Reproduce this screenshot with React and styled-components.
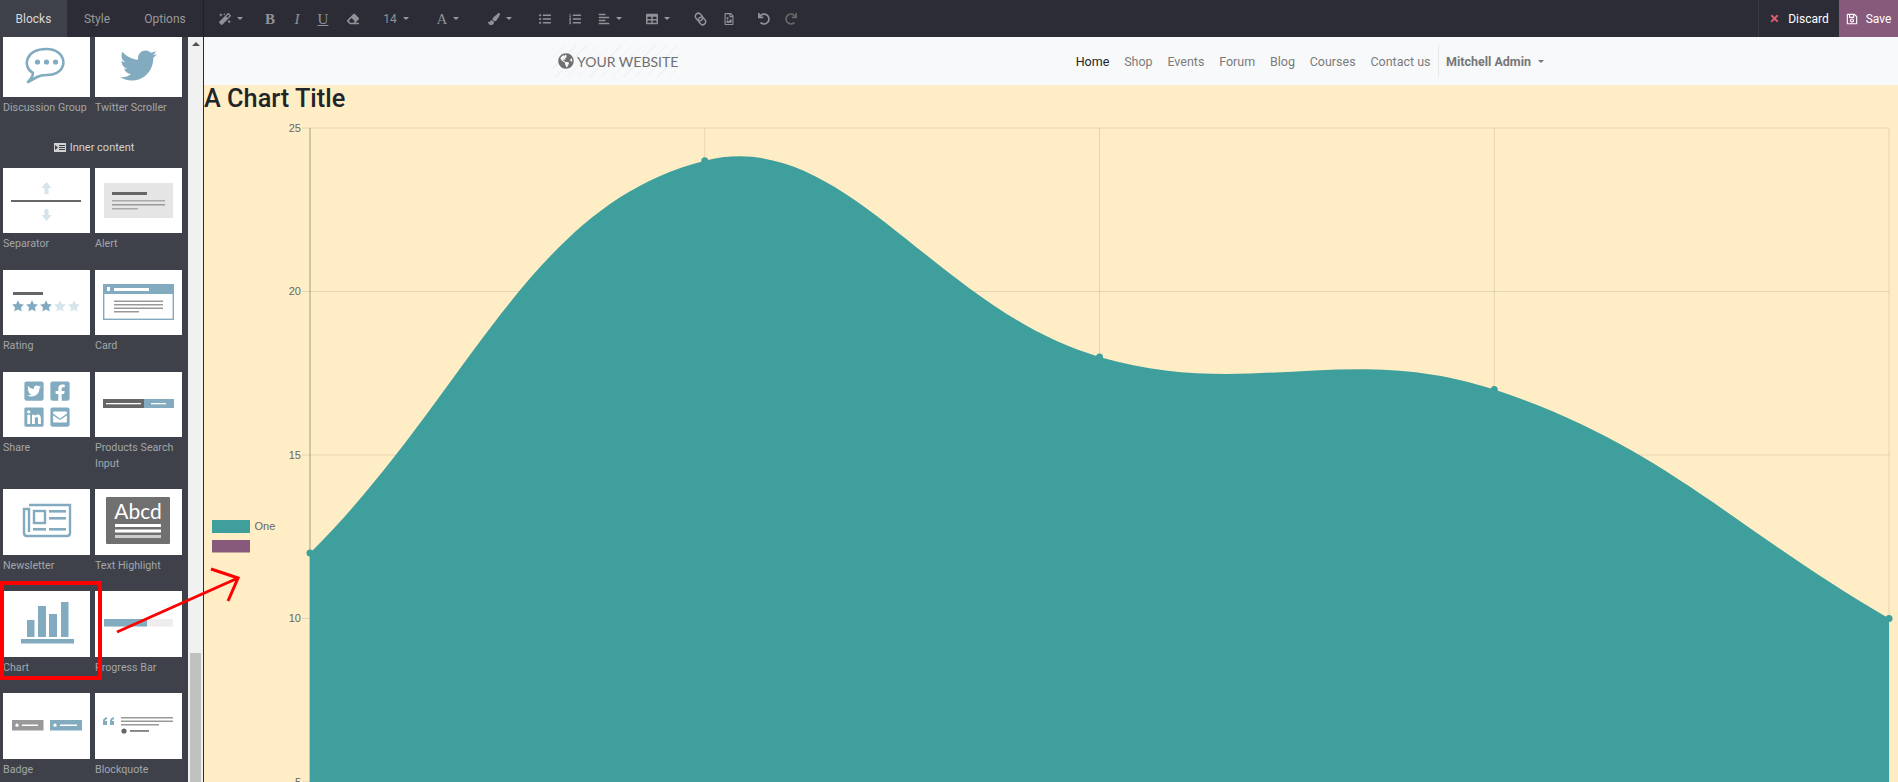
import React from 'react';
import styled, { createGlobalStyle } from 'styled-components';
import {
  FaMagic, FaEraser, FaPaintBrush, FaListUl, FaListOl,
  FaAlignLeft, FaTable, FaRegFileImage, FaUndo, FaRedo, FaTimes, FaRegSave,
  FaTwitter, FaTwitterSquare, FaFacebookSquare, FaLinkedin, FaEnvelopeSquare, FaGlobeAmericas,
} from 'react-icons/fa';

const BLUE = '#82abc0';
const PALE = '#d6e4ec';
const GREY = '#666666';
const TEAL = '#3e9f9d';
const PURPLE = '#875a7b';

const GlobalStyle = createGlobalStyle`
  html, body {
    margin: 0;
    height: 100%;
    overflow: hidden;
    font-family: Roboto, "Liberation Sans", sans-serif;
  }
`;

const Page = styled.div`
  position: relative;
  display: flex;
  flex-direction: column;
  height: 100vh;
  overflow: hidden;
`;

const TopBar = styled.header`
  display: flex;
  flex: 0 0 37px;
  background: #2c2c36;
  color: #999;
  font-size: 12px;
`;

const Tab = styled.div`
  display: flex;
  align-items: center;
  justify-content: center;
  width: ${(p) => p.$w}px;
  background: ${(p) => (p.$active ? '#3e4149' : 'transparent')};
  color: ${(p) => (p.$active ? '#d8d8d8' : '#999')};
`;

const Tools = styled.div`
  display: flex;
  align-items: center;
  border-left: 1px solid #1f1f27;
`;

const Tool = styled.div`
  display: flex;
  align-items: center;
  justify-content: center;
  gap: 6px;
  width: ${(p) => p.$w}px;
  margin-left: ${(p) => p.$ml}px;
  color: ${(p) => p.$color || '#8f9296'};
  font-size: 12px;
`;

const Letter = styled.span`
  font-family: "Liberation Serif", serif;
  font-size: 15px;
  font-weight: ${(p) => (p.$bold ? 700 : 400)};
  font-style: ${(p) => (p.$italic ? 'italic' : 'normal')};
  text-decoration: ${(p) => (p.$underline ? 'underline' : 'none')};
  line-height: 16px;
`;

const Caret = styled.span`
  display: inline-block;
  width: 0;
  height: 0;
  border-left: 3px solid transparent;
  border-right: 3px solid transparent;
  border-top: 3.5px solid ${(p) => p.$color || '#999'};
`;

const ActionButton = styled.div`
  display: flex;
  align-items: center;
  justify-content: center;
  gap: 8px;
  width: ${(p) => p.$w}px;
  color: #fff;
  background: ${(p) => p.$bg};
  border-left: ${(p) => (p.$bordered ? '1px solid #3a3a44' : 'none')};
`;

const ActionBar = styled.div`
  display: flex;
  margin-left: auto;
`;

const Body = styled.div`
  display: flex;
  flex: 1;
  min-height: 0;
`;

const Sidebar = styled.aside`
  flex: 0 0 188px;
  overflow: hidden;
  background: #3e4149;
`;

const SidebarScroll = styled.div`
  margin-top: -5.3px;
`;

const BlockGrid = styled.div`
  display: grid;
  grid-template-columns: 87px 87px;
  column-gap: 5px;
  padding-left: 3px;
`;

const Block = styled.div`
  margin-bottom: 18px;
`;

const Thumb = styled.div`
  height: 65.5px;
  background: #fff;

  svg {
    display: block;
  }
`;

const BlockLabel = styled.div`
  padding-top: 3px;
  color: #a2a6ab;
  font-size: 10.7px;
  line-height: 15.5px;
`;

const SectionTitle = styled.div`
  display: flex;
  align-items: center;
  justify-content: center;
  gap: 4px;
  height: 34px;
  padding-bottom: 6px;
  box-sizing: border-box;
  color: #d0d2d4;
  font-size: 11px;
`;

const ScrollTrack = styled.div`
  display: flex;
  flex-direction: column;
  align-items: center;
  flex: 0 0 15px;
  background: #f1f1f1;
  border-right: 1px solid #2c2c36;
`;

const ScrollArrow = styled.span`
  width: 0;
  height: 0;
  margin-top: 5px;
  border-left: 4px solid transparent;
  border-right: 4px solid transparent;
  border-bottom: 4px solid #505050;
`;

const ScrollThumb = styled.div`
  width: 11px;
  height: 129px;
  margin-top: auto;
  background: #c1c1c1;
`;

const Content = styled.main`
  display: flex;
  flex-direction: column;
  flex: 1;
  min-width: 0;
  background: #ffeec5;
`;

const NavBar = styled.nav`
  display: flex;
  align-items: center;
  flex: 0 0 48px;
  padding: 0 354px 0 349px;
  background: #f8f9fa;
  font-size: 12.5px;
`;

const Logo = styled.div`
  display: flex;
  align-items: center;
  gap: 3px;
  height: 32px;
  padding: 0 3px 0 5px;
  color: #707070;
  font-family: Lato, sans-serif;
  font-size: 14px;
  background: repeating-linear-gradient(135deg, #eef0f2 0 1px, transparent 1px 8px);
`;

const NavLinks = styled.div`
  display: flex;
  align-items: center;
  margin-left: auto;
`;

const NavLink = styled.a`
  padding: 0 7.4px;
  color: ${(p) => (p.$active ? '#212529' : '#7b7b7b')};
`;

const UserMenu = styled.div`
  display: flex;
  align-items: center;
  gap: 7px;
  height: 32px;
  padding-left: 7px;
  color: #777;
  font-weight: 700;
  border-left: 1px solid #e6e7e9;
`;

const ChartTitle = styled.h1`
  margin: 0;
  padding-bottom: 4px;
  color: #212529;
  font-size: 25.3px;
  font-weight: 500;
  line-height: 27px;
`;

const ChartCanvas = styled.svg`
  display: block;
  flex: 1;
  font-family: "Liberation Sans", sans-serif;
`;

const Callout = styled.div`
  position: absolute;
  left: 0;
  top: 581px;
  width: 102px;
  height: 99px;
  box-sizing: border-box;
  border: 4px solid #f00;
`;

const CalloutArrow = styled.svg`
  position: absolute;
  left: 110px;
  top: 560px;
`;

const Thumbnail = ({ children }) =>
  <svg width="87" height="65.5" viewBox="0 0 87 65.5">{children}</svg>;

const ChainIcon = () =>
  <svg width="13" height="14" viewBox="0 0 13 14" fill="none" stroke="currentColor" strokeWidth="1.5">
    <rect x="-3" y="-2" width="6" height="8" rx="3" transform="translate(3.6 3.6) rotate(-42)" />
    <rect x="-3" y="-6" width="6" height="8" rx="3" transform="translate(9.4 10.4) rotate(-42)" />
  </svg>;

const starPoints = (cx, cy, r) =>
  Array.from({ length: 10 }, (_, i) => {
    const a = (Math.PI / 5) * i - Math.PI / 2;
    const d = i % 2 ? r * 0.5 : r;
    return `${cx + d * Math.cos(a)},${cy + d * Math.sin(a)}`;
  }).join(' ');

const arrow = (x, y, dir) =>
  `${x - 2},${y} ${x - 2},${y + 6 * dir} ${x + 2},${y + 6 * dir} ${x + 2},${y} ${x + 5},${y} ${x},${y - 6 * dir} ${x - 5},${y}`;

const blocksTop = [
  {
    label: 'Discussion Group',
    art: (
      <Thumbnail>
        <path
          d="M30 41 C19 35 22 17 43.5 17 C65 17 67 43 43.5 43 C40 43 37 43.5 34 45 L25 50 C28 47 30 44 30 41 Z"
          fill="none" stroke={BLUE} strokeWidth="2.6" strokeLinejoin="round"
        />
        <circle cx="34.5" cy="30" r="2.6" fill={BLUE} />
        <circle cx="43.5" cy="30" r="2.6" fill={BLUE} />
        <circle cx="52.6" cy="30" r="2.6" fill={BLUE} />
      </Thumbnail>
    ),
  },
  {
    label: 'Twitter Scroller',
    art: <Thumbnail><FaTwitter x={25} y={15} size={37} color={BLUE} /></Thumbnail>,
  },
];

const blocks = [
  {
    label: 'Separator',
    art: (
      <Thumbnail>
        <polygon points={arrow(43.5, 20, 1)} fill={PALE} />
        <rect x="8" y="32" width="70" height="2" fill={GREY} />
        <polygon points={arrow(43.5, 47, -1)} fill={PALE} />
      </Thumbnail>
    ),
  },
  {
    label: 'Alert',
    art: (
      <Thumbnail>
        <rect x="9" y="15" width="69" height="35" fill="#e5e5e5" />
        <rect x="17" y="24" width="35" height="3" fill={GREY} />
        <rect x="17" y="32" width="53" height="1.5" fill="#aaa" />
        <rect x="17" y="36" width="53" height="1.5" fill="#999" />
        <rect x="17" y="40" width="26" height="1.5" fill="#aaa" />
      </Thumbnail>
    ),
  },
  {
    label: 'Rating',
    art: (
      <Thumbnail>
        <rect x="10" y="22" width="30" height="3" fill={GREY} />
        {[15, 29, 43, 57, 71].map((x, i) =>
          <polygon key={x} points={starPoints(x, 36.5, 6.2)} fill={i < 3 ? BLUE : PALE} />)}
      </Thumbnail>
    ),
  },
  {
    label: 'Card',
    art: (
      <Thumbnail>
        <rect x="8.7" y="14.7" width="69.6" height="34.6" fill="#fff" stroke={BLUE} strokeWidth="1.4" />
        <rect x="8" y="14" width="71" height="10" fill={BLUE} />
        <rect x="12" y="17" width="3" height="4" fill="#fff" />
        <rect x="19" y="18" width="35" height="3" fill="#fff" />
        <rect x="19" y="30.5" width="49" height="1.5" fill="#999" />
        <rect x="19" y="34" width="49" height="1.5" fill="#999" />
        <rect x="19" y="37.5" width="49" height="1.5" fill="#999" />
        <rect x="19" y="41" width="25" height="1.5" fill="#999" />
      </Thumbnail>
    ),
  },
  {
    label: 'Share',
    art: (
      <Thumbnail>
        <FaTwitterSquare x={20} y={8} size={22} color={BLUE} />
        <FaFacebookSquare x={46} y={8} size={22} color={BLUE} />
        <FaLinkedin x={20} y={34} size={22} color={BLUE} />
        <FaEnvelopeSquare x={46} y={34} size={22} color={BLUE} />
      </Thumbnail>
    ),
  },
  {
    label: 'Products Search Input',
    art: (
      <Thumbnail>
        <rect x="8" y="27" width="41" height="9" fill={GREY} />
        <rect x="49" y="27" width="30" height="9" fill={BLUE} />
        <rect x="11" y="31" width="35" height="1.3" fill="#fff" />
        <rect x="56" y="31" width="15" height="1.3" fill="#fff" />
      </Thumbnail>
    ),
  },
  {
    label: 'Newsletter',
    art: (
      <Thumbnail>
        <path
          d="M26 16 H67 V44 Q67 47 64 47 H24 Q21 47 21 44 V20 H26 V43"
          fill="none" stroke={BLUE} strokeWidth="2.4"
        />
        <rect x="31" y="22" width="11" height="12" fill="none" stroke={BLUE} strokeWidth="2.4" />
        <rect x="46" y="21" width="17" height="2.6" fill={BLUE} />
        <rect x="46" y="28" width="17" height="2.6" fill={BLUE} />
        <rect x="30" y="39" width="13" height="2.6" fill={BLUE} />
        <rect x="46" y="39" width="17" height="2.6" fill={BLUE} />
      </Thumbnail>
    ),
  },
  {
    label: 'Text Highlight',
    art: (
      <Thumbnail>
        <rect x="11" y="8" width="64" height="47" rx="1" fill="#707070" />
        <text x="43" y="30" fill="#fff" fontFamily="Lato, sans-serif" fontSize="21" textAnchor="middle">Abcd</text>
        <rect x="20" y="35" width="46" height="3" fill="#fff" />
        <rect x="20" y="40.5" width="46" height="3" fill="#fff" />
        <rect x="20" y="46" width="46" height="3" fill="#ccc" />
      </Thumbnail>
    ),
  },
  {
    label: 'Chart',
    art: (
      <Thumbnail>
        <rect x="24" y="29" width="7.5" height="17" fill={BLUE} />
        <rect x="35" y="15" width="8" height="31" fill={BLUE} />
        <rect x="46" y="23" width="8" height="23" fill={BLUE} />
        <rect x="58" y="11" width="7.5" height="35" fill={BLUE} />
        <rect x="18" y="48" width="53" height="4.5" fill={BLUE} />
      </Thumbnail>
    ),
  },
  {
    label: 'Progress Bar',
    art: (
      <Thumbnail>
        <rect x="9" y="28" width="69" height="7.5" fill="#ededed" />
        <rect x="9" y="28" width="43" height="7.5" fill={BLUE} />
      </Thumbnail>
    ),
  },
  {
    label: 'Badge',
    art: (
      <Thumbnail>
        <rect x="9" y="27" width="31.5" height="10.5" fill="#999" />
        <circle cx="14" cy="32.2" r="1.6" fill="#fff" />
        <rect x="19" y="31.5" width="16" height="1.5" fill="#fff" />
        <rect x="47" y="27" width="32" height="10.5" fill={BLUE} />
        <circle cx="52" cy="32.2" r="1.6" fill="#fff" />
        <rect x="57" y="31.5" width="17" height="1.5" fill="#fff" />
      </Thumbnail>
    ),
  },
  {
    label: 'Blockquote',
    art: (
      <Thumbnail>
        <path d="M8 32 V28 Q8 25 12 24 V26 Q10 26.5 10 28 H12 V32 Z M15 32 V28 Q15 25 19 24 V26 Q17 26.5 17 28 H19 V32 Z" fill={BLUE} />
        <rect x="26" y="24" width="52" height="1.5" fill="#999" />
        <rect x="26" y="27.5" width="52" height="1.5" fill="#999" />
        <rect x="26" y="31" width="38" height="1.5" fill="#999" />
        <circle cx="29" cy="38" r="2.6" fill={GREY} />
        <rect x="35" y="37.2" width="19" height="1.5" fill={GREY} />
      </Thumbnail>
    ),
  },
];

const PLOT_LEFT = 310;
const PLOT_TOP = 128;
const PLOT_RIGHT = 1889;
const STEP_X = (PLOT_RIGHT - PLOT_LEFT) / 4;
const UNIT_Y = 32.7;
const BOTTOM = 782;

const valueY = (v) => PLOT_TOP + (25 - v) * UNIT_Y;
const points = [12, 24, 18, 17, 10].map((v, i) => ({ x: PLOT_LEFT + STEP_X * i, y: valueY(v) }));

// same control points as a chart.js line with tension 0.4
const controls = points.map((p, i) => {
  const prev = points[i - 1] || p;
  const next = points[i + 1] || p;
  const d01 = Math.hypot(p.x - prev.x, p.y - prev.y);
  const d12 = Math.hypot(next.x - p.x, next.y - p.y);
  const fa = (0.4 * d01) / (d01 + d12);
  const fb = (0.4 * d12) / (d01 + d12);
  return {
    before: { x: p.x - fa * (next.x - prev.x), y: p.y - fa * (next.y - prev.y) },
    after: { x: p.x + fb * (next.x - prev.x), y: p.y + fb * (next.y - prev.y) },
  };
});

const areaPath = points.reduce((d, p, i) => {
  if (i === 0) return `M${p.x} ${BOTTOM} L${p.x} ${p.y}`;
  const a = controls[i - 1].after;
  const b = controls[i].before;
  return `${d} C${a.x} ${a.y} ${b.x} ${b.y} ${p.x} ${p.y}`;
}, '') + ` L${PLOT_RIGHT} ${BOTTOM} Z`;

const Chart = () =>
  <ChartCanvas viewBox="204 116 1694 666" width="1694" height="666">
    {[25, 20, 15, 10, 5].map((v) =>
      <g key={v}>
        <line x1={PLOT_LEFT - 8} x2={PLOT_RIGHT} y1={valueY(v)} y2={valueY(v)} stroke="#000" strokeOpacity="0.1" />
        <text x={PLOT_LEFT - 9} y={valueY(v) + 3.5} fontSize="11" fill="#666" textAnchor="end">{v}</text>
      </g>)}
    {points.map((p, i) =>
      <line
        key={p.x} x1={p.x} x2={p.x} y1={PLOT_TOP} y2={BOTTOM}
        stroke="#000" strokeOpacity={i === 0 ? 0.35 : 0.1}
      />)}
    <path d={areaPath} fill={TEAL} />
    {points.map((p) => <circle key={p.x} cx={p.x} cy={p.y} r="3.5" fill={TEAL} />)}
    <rect x="212" y="520" width="38" height="13" fill={TEAL} />
    <text x="254.5" y="530" fontSize="11" fill="#666">One</text>
    <rect x="212" y="540" width="38" height="12.5" fill={PURPLE} />
  </ChartCanvas>;

const tools = [
  { icon: <FaMagic />, ml: 14, w: 26, caret: true },
  { icon: <Letter $bold>B</Letter>, ml: 19, w: 14 },
  { icon: <Letter $italic>I</Letter>, ml: 13, w: 14 },
  { icon: <Letter $underline>U</Letter>, ml: 12, w: 14 },
  { icon: <FaEraser />, ml: 16, w: 14 },
  { icon: '14', ml: 24, w: 24, caret: true },
  { icon: <Letter>A</Letter>, ml: 28, w: 24, caret: true },
  { icon: <FaPaintBrush />, ml: 28, w: 24, caret: true },
  { icon: <FaListUl />, ml: 26, w: 14 },
  { icon: <FaListOl />, ml: 16, w: 14 },
  { icon: <FaAlignLeft />, ml: 16, w: 24, caret: true },
  { icon: <FaTable />, ml: 24, w: 24, caret: true },
  { icon: <ChainIcon />, ml: 23, w: 14 },
  { icon: <FaRegFileImage />, ml: 15, w: 14 },
  { icon: <FaUndo />, ml: 21, w: 14 },
  { icon: <FaRedo />, ml: 13, w: 14, color: '#666' },
];

const navItems = ['Home', 'Shop', 'Events', 'Forum', 'Blog', 'Courses', 'Contact us'];

const BlockItem = ({ label, art }) =>
  <Block>
    <Thumb>{art}</Thumb>
    <BlockLabel>{label}</BlockLabel>
  </Block>;

const App = () =>
  <Page>
    <GlobalStyle />
    <TopBar>
      <Tab $w={67} $active>Blocks</Tab>
      <Tab $w={60}>Style</Tab>
      <Tab $w={76}>Options</Tab>
      <Tools>
        {tools.map((t, i) =>
          <Tool key={i} $ml={t.ml} $w={t.w} $color={t.color}>
            {t.icon}
            {t.caret && <Caret />}
          </Tool>)}
      </Tools>
      <ActionBar>
        <ActionButton $w={80} $bordered>
          <FaTimes color="#dc5c6e" size={11} />
          Discard
        </ActionButton>
        <ActionButton $w={59} $bg={PURPLE}>
          <FaRegSave size={12} />
          Save
        </ActionButton>
      </ActionBar>
    </TopBar>
    <Body>
      <Sidebar>
        <SidebarScroll>
          <BlockGrid>
            {blocksTop.map((b) => <BlockItem key={b.label} {...b} />)}
          </BlockGrid>
          <SectionTitle>
            <svg width="12" height="9" viewBox="0 0 12 9">
              <rect width="12" height="9" fill="#d0d2d4" />
              <rect x="5" y="2" width="6" height="1" fill="#3e4149" />
              <rect x="5" y="4" width="6" height="1" fill="#3e4149" />
              <rect x="5" y="6" width="6" height="1" fill="#3e4149" />
              <polygon points="1,2 4,4.5 1,7" fill="#3e4149" />
            </svg>
            Inner content
          </SectionTitle>
          <BlockGrid>
            {blocks.map((b) => <BlockItem key={b.label} {...b} />)}
          </BlockGrid>
        </SidebarScroll>
      </Sidebar>
      <ScrollTrack>
        <ScrollArrow />
        <ScrollThumb />
      </ScrollTrack>
      <Content>
        <NavBar>
          <Logo>
            <FaGlobeAmericas size={16} />
            YOUR WEBSITE
          </Logo>
          <NavLinks>
            {navItems.map((item, i) => <NavLink key={item} $active={i === 0}>{item}</NavLink>)}
            <UserMenu>
              Mitchell Admin
              <Caret $color="#777" />
            </UserMenu>
          </NavLinks>
        </NavBar>
        <ChartTitle>A Chart Title</ChartTitle>
        <Chart />
      </Content>
    </Body>
    <Callout />
    <CalloutArrow width="130" height="80" viewBox="110 560 130 80">
      <path d="M117 632 L238 578 M211 569 L238 578 L228 601" fill="none" stroke="#f00" strokeWidth="3" />
    </CalloutArrow>
  </Page>;

export default App;
